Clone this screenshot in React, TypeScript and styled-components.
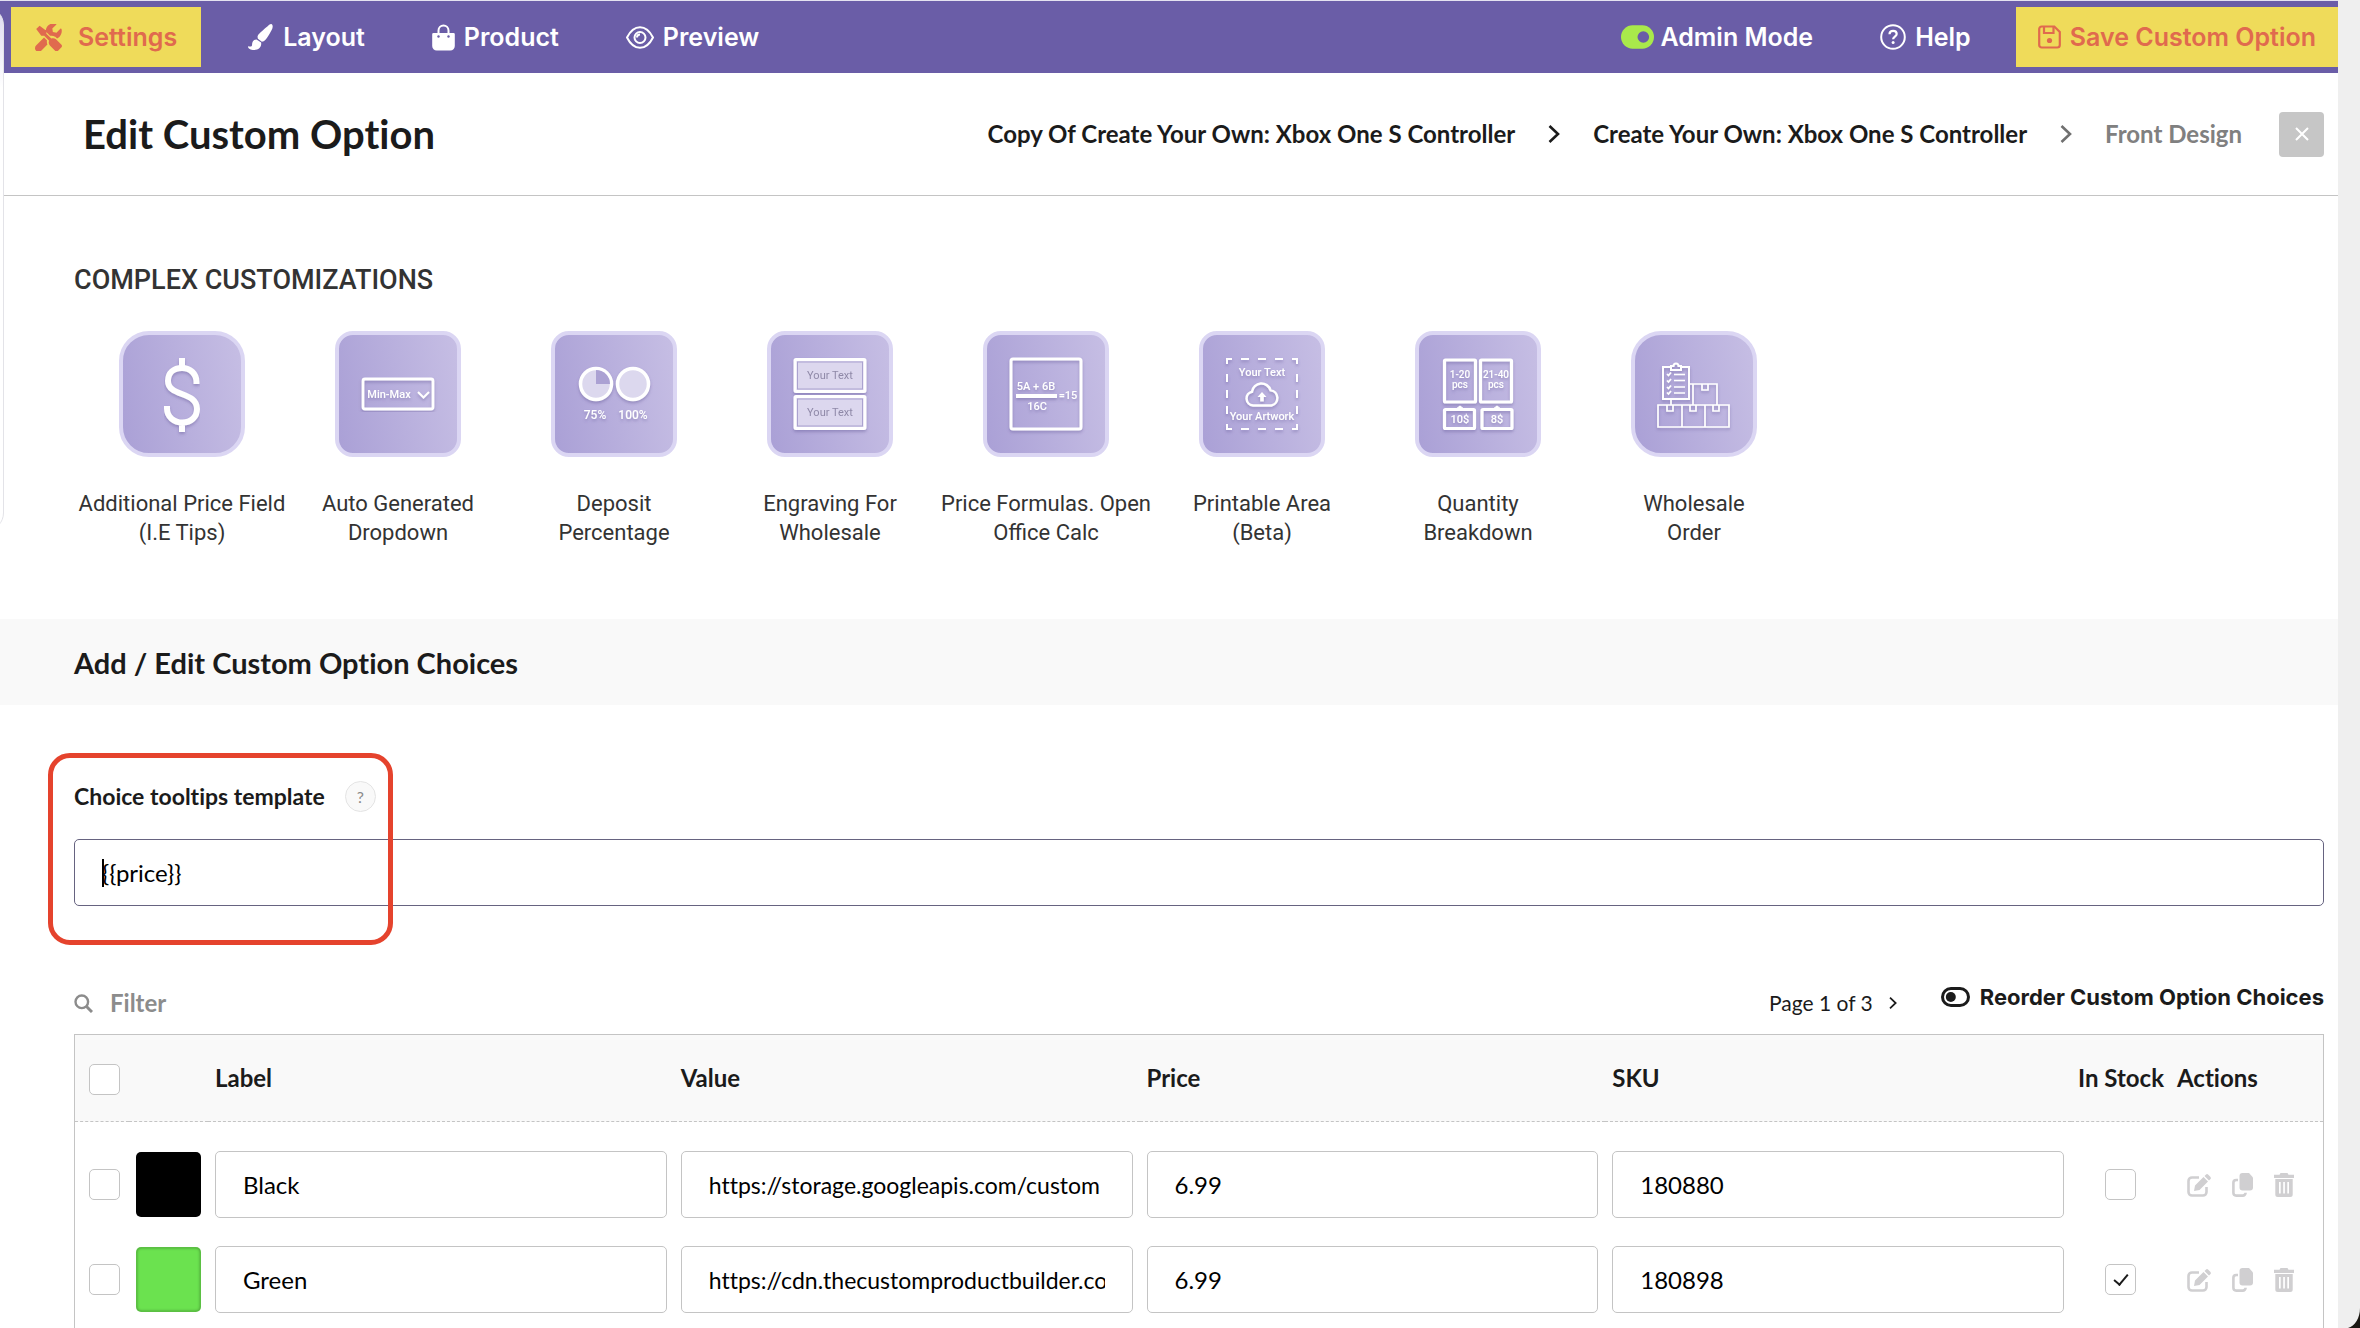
import React, { useId, useState } from "react";
import styled, { createGlobalStyle, css } from "styled-components";

const lato = `Lato, "Open Sans", sans-serif`;
const inter = `Inter, Roboto, sans-serif`;
const roboto = `Roboto, "Noto Sans", sans-serif`;

const GlobalStyle = createGlobalStyle`
  * { box-sizing: border-box; }
  html { height: 100%; overflow: hidden; background: #efefef; }
  body {
    margin: 0;
    font-family: ${lato};
    font-variant-ligatures: none;
    color: #1b1b1b;
  }
  button, input { font: inherit; color: inherit; font-variant-ligatures: none; }
  button { border: 0; padding: 0; background: none; cursor: pointer; }
  svg { display: block; flex: none; }
`;

const Frame = styled.div`
  position: relative;
  display: flex;
  height: 100vh;
  overflow: hidden;
  padding-right: 22px;
  background: #efefef;
`;

const Page = styled.main`
  flex: 1;
  min-width: 0;
  background: #fff;
  border-top: 1px solid #e4e2f0;
`;

const SidePanelEdge = styled.div`
  position: absolute;
  left: -40px;
  top: 7px;
  width: 44px;
  height: 524px;
  border: 1px solid #e3e3e8;
  border-radius: 0 18px 18px 0;
  background: linear-gradient(#dedaf0, #fff 80px);
`;

const WindowCorner = styled.svg`
  position: absolute;
  right: 0;
  bottom: 0;
`;

const TopBar = styled.header`
  display: flex;
  align-items: center;
  justify-content: space-between;
  height: 72px;
  padding-left: 11px;
  background: #6a5da7;
`;

const BarGroup = styled.nav`
  display: flex;
  align-items: center;
`;

const BarButton = styled.button<{ $accent?: boolean; $gap: number; $pad: number }>`
  display: flex;
  align-items: center;
  gap: ${(p) => p.$gap}px;
  height: 60px;
  padding: 0 ${(p) => p.$pad}px;
  font: 600 25px/30px ${inter};
  color: ${(p) => (p.$accent ? "#e06a4e" : "#fff")};
  background: ${(p) => (p.$accent ? "#efdb5a" : "transparent")};
  white-space: nowrap;
`;

const TitleBar = styled.div`
  display: flex;
  align-items: center;
  justify-content: space-between;
  height: 123px;
  padding: 0 14px 0 83px;
  border-bottom: 1px solid #c4c4c4;
`;

const PageTitle = styled.h1`
  margin: 0;
  font-size: 40px;
  line-height: 48px;
  font-weight: 700;
`;

const Crumbs = styled.nav`
  display: flex;
  align-items: center;
  gap: 33px;
  font-size: 24px;
  line-height: 30px;
  font-weight: 700;
`;

const Crumb = styled.a<{ $current?: boolean }>`
  color: ${(p) => (p.$current ? "#808080" : "#1b1b1b")};
  text-decoration: none;
`;

const CloseButton = styled.button`
  display: grid;
  place-items: center;
  width: 45px;
  height: 45px;
  margin-left: 4px;
  border-radius: 4px;
  background: #c6c6c6;
`;

const Section = styled.section<{ $top: number }>`
  padding: ${(p) => p.$top}px 14px 0 74px;
`;

const GroupTitle = styled.h2`
  margin: 0;
  font: 500 27px/36px ${roboto};
  color: #333;
`;

const TileRow = styled.div`
  display: flex;
  margin: 33px 0 72px;
`;

const TileButton = styled.button`
  display: flex;
  flex-direction: column;
  align-items: center;
  gap: 32px;
  width: 216px;
`;

const TileArt = styled.span<{ $round?: boolean }>`
  display: block;
  width: 126px;
  height: 126px;
  border: 4px solid #dbd6f3;
  border-radius: ${(p) => (p.$round ? 30 : 18)}px;
  background: linear-gradient(80deg, #aaa0d6, #c6bee4);
  font-family: ${roboto};
`;

const TileLabel = styled.span`
  font: 400 22px/29px ${roboto};
  color: #333;
  white-space: pre-line;
`;

const SectionBar = styled.div`
  padding: 25px 74px 23px;
  background: #f9f9f9;
`;

const SectionTitle = styled.h2`
  margin: 0;
  font-size: 29px;
  line-height: 38px;
  font-weight: 700;
`;

const TemplateField = styled.div`
  position: relative;
  display: flex;
  flex-direction: column;
  gap: 27px;
`;

const LabelRow = styled.div`
  display: flex;
  align-items: center;
  gap: 20px;
  height: 32px;
`;

const FieldLabel = styled.label`
  font-size: 23px;
  line-height: 30px;
  font-weight: 700;
`;

const HelpButton = styled.button`
  width: 31px;
  height: 31px;
  border: 1px solid #e4e4e4;
  border-radius: 50%;
  background: #f9f9f9;
  color: #8a8a8a;
  font-size: 16px;
  line-height: 29px;
`;

const TextBox = styled.input<{ $focused?: boolean; $compact?: boolean }>`
  display: block;
  width: 100%;
  height: 67px;
  padding: 0 27px;
  border: 1px solid ${(p) => (p.$focused ? "#666380" : "#c4c4c4")};
  border-radius: 5px;
  background: #fff;
  color: #000;
  font-size: ${(p) => (p.$compact ? 23 : 24)}px;
  outline: none;
`;

const Caret = styled.span`
  position: absolute;
  left: 28px;
  bottom: 19px;
  width: 2px;
  height: 28px;
  background: #000;
`;

const Highlight = styled.div`
  position: absolute;
  left: -26px;
  top: -27px;
  width: 345px;
  height: 192px;
  border: 5px solid #e5432d;
  border-radius: 22px;
  pointer-events: none;
`;

const ListTools = styled.div`
  display: flex;
  align-items: center;
  height: 62px;
  margin-top: 66px;
`;

const FilterBox = styled.label`
  display: flex;
  flex: 1;
  align-items: center;
  gap: 17px;
  color: #8c8c8c;
`;

const FilterInput = styled.input`
  flex: 1;
  padding: 0;
  border: 0;
  outline: none;
  background: none;
  font-size: 24px;
  line-height: 30px;
  font-weight: 700;
  &::placeholder { color: #8c8c8c; opacity: 1; }
`;

const Pager = styled.div`
  display: flex;
  align-items: center;
  gap: 16px;
  font-size: 21px;
  line-height: 28px;
`;

const ReorderButton = styled.button`
  display: flex;
  align-items: center;
  gap: 10px;
  margin-left: 44px;
  padding-bottom: 12px;
  font: 700 22px/28px ${inter};
`;

const ChoiceTable = styled.table`
  width: 100%;
  table-layout: fixed;
  border-collapse: separate;
  border-spacing: 0;
  border: 1px solid #c4c4c4;
  border-bottom: 0;
`;

const Col = styled.col<{ $w?: number }>`
  ${(p) => p.$w && css`width: ${p.$w}px;`}
`;

const HeadCell = styled.th`
  height: 87px;
  padding: 0 7px;
  border-bottom: 1px dashed #c4c4c4;
  background: #f9f9f9;
  text-align: left;
  font-size: 24px;
  line-height: 30px;
  font-weight: 700;
  white-space: nowrap;
  &:first-child { padding-left: 14px; }
`;

const Row = styled.tr`
  &:first-child > td { padding-top: 29px; }
  &:last-child > td { padding-bottom: 29px; }
`;

const Cell = styled.td<{ $center?: boolean }>`
  padding: 14px 7px;
  text-align: ${(p) => (p.$center ? "center" : "left")};
  &:first-child { padding-left: 14px; }
`;

const Check = styled.input`
  appearance: none;
  display: inline-grid;
  place-items: center;
  width: 31px;
  height: 31px;
  margin: 0;
  border: 1px solid #c4c4c4;
  border-radius: 5px;
  background: #fff;
  vertical-align: middle;
  &:checked::after {
    content: "";
    width: 6px;
    height: 12px;
    margin-bottom: 3px;
    border: solid #1b1b1b;
    border-width: 0 2px 2px 0;
    transform: rotate(40deg);
  }
`;

const Swatch = styled.button<{ $color: string }>`
  display: block;
  width: 65px;
  height: 65px;
  border-radius: 5px;
  border: 1px solid rgba(0, 0, 0, 0.15);
  box-shadow: inset 0 0 3px rgba(0, 0, 0, 0.35);
  background: ${(p) => p.$color};
`;

const Actions = styled.div`
  display: flex;
  align-items: center;
  gap: 21px;
  padding-left: 10px;
`;

const IconButton = styled.button`
  color: #d0cfd1;
`;

const ToolsIcon = () => (
  <svg width="27" height="27" viewBox="0 0 512 512" fill="currentColor">
    <path d="M502 395 398 291c-24-24-60-29-89-14l-94-94v-55L87 32 23 96l96 128h55l94 94c-15 29-10 65 14 89l104 104c13 13 34 13 47 0l69-69c13-13 13-34 0-47zM331 226c26 0 51 10 69 29l19 19c16-7 30-17 43-29 40-40 54-97 41-148-2-10-15-13-22-6l-74 74-68-11-11-68 74-74c8-8 4-20-6-23-51-13-108 2-148 41-31 31-45 72-44 112l82 83c14-3 29-4 45-2zM228 315l-57-57L20 410c-27 27-27 71 0 98 27 27 71 27 98 0l117-118c-10-24-13-50-7-75z" />
  </svg>
);

const BrushIcon = () => (
  <svg width="28" height="26" viewBox="0 0 512 512" fill="currentColor">
    <path d="M168 305c-65 0-89 47-89 110 0 40-50 30-79 22 0 50 50 75 120 75 85 0 140-48 140-122 0-9 0-18-2-27zM457 0c-15 0-30 7-40 17C213 199 189 214 189 262c0 10 2 20 6 29l78 59c50-6 90-40 190-227 12-22 23-46 23-71C486 22 472 0 457 0z" transform="translate(20 0)" />
  </svg>
);

const BagIcon = () => (
  <svg width="23" height="27" viewBox="0 0 23 27" fill="none">
    <path d="M6.500 11V6.500a5 5 0 0 1 10 0V11" stroke="#fff" strokeWidth="2" />
    <path d="M1.500 9h20a1.300 1.300 0 0 1 1.300 1.300V22a4.500 4.500 0 0 1-4.500 4.500H4.700A4.500 4.500 0 0 1 .2 22V10.300A1.300 1.300 0 0 1 1.500 9z" fill="#fff" />
    <circle cx="6.500" cy="12.500" r="1.200" fill="#6a5da7" />
    <circle cx="16.500" cy="12.500" r="1.200" fill="#6a5da7" />
  </svg>
);

const EyeIcon = () => (
  <svg width="28" height="23" viewBox="0 0 28 23" fill="none" stroke="#fff" strokeWidth="2">
    <path d="M1 11.500C4.500 4.500 9 1.200 14 1.200s9.500 3.300 13 10.300c-3.500 7-8 10.300-13 10.300S4.500 18.500 1 11.500z" />
    <circle cx="14" cy="11.500" r="5.500" />
    <path d="M14 8.500a3 3 0 0 0-3 3" />
  </svg>
);

const ToggleOnIcon = () => (
  <svg width="33" height="24" viewBox="0 0 34 24">
    <rect width="34" height="24" rx="12" fill="#a9e94b" />
    <circle cx="23" cy="12" r="6" fill="#6a5da7" />
  </svg>
);

const HelpIcon = () => (
  <svg width="26" height="26" viewBox="0 0 26 26" fill="none" stroke="#fff" strokeWidth="2">
    <circle cx="13" cy="13" r="11.800" />
    <path d="M9.500 10.200c0-2 1.500-3.400 3.600-3.400s3.600 1.300 3.600 3.200c0 2.600-3.600 2.700-3.600 5.200" strokeWidth="2.200" />
    <circle cx="13.100" cy="18.600" r="1.500" fill="#fff" stroke="none" />
  </svg>
);

const SaveIcon = () => (
  <svg width="23" height="24" viewBox="0 0 23 24" fill="none" stroke="currentColor" strokeWidth="2.200">
    <path d="M1.200 4A2.500 2.500 0 0 1 3.700 1.500h12.600l5.500 5.500v13a2.500 2.500 0 0 1-2.500 2.500H3.700A2.500 2.500 0 0 1 1.200 20z" />
    <path d="M6 2v6h9.500V2" />
    <circle cx="11.500" cy="15.500" r="2.600" fill="currentColor" stroke="none" />
  </svg>
);

const Chevron = ({ color = "#1b1b1b", size = 18 }: { color?: string; size?: number }) => (
  <svg width={(size * 2) / 3} height={size} viewBox="0 0 12 18" fill="none">
    <path d="M1.500 1 10 9l-8.500 8" stroke={color} strokeWidth="2.600" />
  </svg>
);

const SearchIcon = () => (
  <svg width="19" height="19" viewBox="0 0 19 19" fill="none" stroke="currentColor" strokeWidth="2.400">
    <circle cx="7.800" cy="7.800" r="6.300" />
    <path d="m12 12 6 6" strokeWidth="3" />
  </svg>
);

const ToggleOffIcon = () => (
  <svg width="29" height="20" viewBox="0 0 29 20">
    <rect x="1.500" y="1.500" width="26" height="17" rx="8.500" fill="none" stroke="#1b1b1b" strokeWidth="3" />
    <circle cx="9.800" cy="10" r="5" fill="#1b1b1b" />
  </svg>
);

const EditIcon = () => (
  <svg width="24" height="24" viewBox="0 0 24 24" fill="none">
    <path d="M12 4.500H5A3.500 3.500 0 0 0 1.500 8v11A3.500 3.500 0 0 0 5 22.500h11a3.500 3.500 0 0 0 3.500-3.500v-5" stroke="currentColor" strokeWidth="2.600" />
    <path d="m7 18 1-5.500 8.500-8.500 4.500 4.500-8.500 8.500zM17.500 3l1.300-1.300a1.800 1.800 0 0 1 2.500 0l2 2a1.800 1.800 0 0 1 0 2.500L22 7.500z" fill="currentColor" />
  </svg>
);

const CopyIcon = () => (
  <svg width="21" height="24" viewBox="0 0 21 24">
    <path d="M10.500 0h6.500l4 4.500v10a3 3 0 0 1-3 3h-7.500a3 3 0 0 1-3-3V3a3 3 0 0 1 3-3z" fill="currentColor" />
    <path d="M6 7H4.200A2.800 2.800 0 0 0 1.400 9.800v10a2.800 2.800 0 0 0 2.800 2.800h6.600a2.800 2.800 0 0 0 2.800-2.800" fill="none" stroke="currentColor" strokeWidth="2.600" />
  </svg>
);

const TrashIcon = () => (
  <svg width="20" height="24" viewBox="0 0 20 24" fill="currentColor">
    <path d="M6.500 0h7l1 1.800H20V5H0V1.800h5.500z" />
    <path fillRule="evenodd" d="M1.300 6h17.400v15.500A2.500 2.500 0 0 1 16.200 24H3.800a2.500 2.500 0 0 1-2.500-2.500zM5 9v11.500h1.700V9zm4.200 0v11.500h1.700V9zm4.100 0v11.500H15V9z" />
  </svg>
);

const Art = ({ children }: { children: React.ReactNode }) => {
  const id = useId();
  return (
    <svg width="118" height="118" viewBox="4 4 118 118" fill="none" stroke="#fff">
      <filter id={id} x="-10%" y="-10%" width="120%" height="120%">
        <feDropShadow dx="0" dy="2" stdDeviation="1.500" floodColor="#5b4f8e" floodOpacity="0.4" />
      </filter>
      <g filter={`url(#${id})`}>{children}</g>
    </svg>
  );
};

const ArtText = styled.text<{ $size?: number; $muted?: boolean }>`
  font: ${(p) => (p.$muted ? 400 : 500)} ${(p) => p.$size ?? 11}px ${roboto};
  text-anchor: middle;
  fill: ${(p) => (p.$muted ? "#8f89a8" : "#fff")};
  stroke: none;
`;

const DollarArt = () => (
  <Art>
    <path d="M77.500 53v-2c0-8-6-14-14.500-14s-14 5-14 13c0 16 29 10 29 28 0 8-6 13.500-14.500 13.500S48 86 48 77.500V75M63 27v10m0 54v10" strokeWidth="6" />
  </Art>
);

const DropdownArt = () => (
  <Art>
    <rect x="28" y="48" width="70" height="30" rx="2" strokeWidth="2.800" />
    <ArtText x="54" y="67">Min-Max</ArtText>
    <path d="m83 61 5.500 5.500L94 61" strokeWidth="2" />
  </Art>
);

const DepositArt = () => (
  <Art>
    <circle cx="45" cy="53" r="15.500" fill="#dcd8ee" strokeWidth="3.500" />
    <path d="M45 53V39a14 14 0 0 1 14 14z" fill="#aba1d3" stroke="none" />
    <circle cx="82" cy="53" r="15.500" fill="#dcd8ee" strokeWidth="3.500" />
    <ArtText x="44" y="88" $size={12}>75%</ArtText>
    <ArtText x="82" y="88" $size={12}>100%</ArtText>
  </Art>
);

const EngravingArt = () => (
  <Art>
    <rect x="28" y="28.500" width="70" height="32" rx="1" fill="#dcd7ee" strokeWidth="3" />
    <rect x="30.500" y="31" width="65" height="27" stroke="#aaa2cf" />
    <rect x="28" y="65.500" width="70" height="32" rx="1" fill="#dcd7ee" strokeWidth="3" />
    <rect x="30.500" y="68" width="65" height="27" stroke="#aaa2cf" />
    <ArtText x="63" y="48" $muted>Your Text</ArtText>
    <ArtText x="63" y="85" $muted>Your Text</ArtText>
  </Art>
);

const FormulaArt = () => (
  <Art>
    <rect x="28" y="28" width="70" height="70" rx="2" strokeWidth="3" />
    <ArtText x="53" y="59">5A + 6B</ArtText>
    <path d="M33 65h41" strokeWidth="4" />
    <ArtText x="54" y="79">16C</ArtText>
    <ArtText x="85" y="68">=15</ArtText>
  </Art>
);

const PrintableArt = () => (
  <Art>
    <path d="M28 33v-5h5m60 0h5v5m0 60v5h-5m-60 0h-5v-5M42 28h8m9 0h8m9 0h8M42 98h8m9 0h8m9 0h8M28 43v8m0 8v8m0 8v8M98 43v8m0 8v8m0 8v8" strokeWidth="2" />
    <ArtText x="63" y="45">Your Text</ArtText>
    <path d="M54 74.500a7 7 0 0 1-1-13.800 9.500 9.500 0 0 1 18.500-1.500 7.800 7.800 0 0 1 1 15.300z" strokeWidth="2.500" />
    <path d="m63 61 4.500 5h-2.700v4.500h-3.600V66h-2.700z" fill="#fff" stroke="none" />
    <ArtText x="63" y="89">Your Artwork</ArtText>
  </Art>
);

const QuantityArt = () => (
  <Art>
    <rect x="29.500" y="29" width="31" height="42" rx="1" strokeWidth="3.200" />
    <rect x="65.500" y="29" width="31" height="42" rx="1" strokeWidth="3.200" />
    <rect x="29.500" y="78.500" width="30" height="19" rx="1" strokeWidth="3.200" />
    <rect x="67" y="78.500" width="30" height="19" rx="1" strokeWidth="3.200" />
    <path d="m41 78 4-3 4 3zm37 0 4-3 4 3z" fill="#fff" strokeWidth="1" />
    <ArtText x="45" y="47" $size={10}>1-20</ArtText>
    <ArtText x="45" y="57" $size={10}>pcs</ArtText>
    <ArtText x="81" y="47" $size={10}>21-40</ArtText>
    <ArtText x="81" y="57" $size={10}>pcs</ArtText>
    <ArtText x="45" y="92">10$</ArtText>
    <ArtText x="82" y="92">8$</ArtText>
  </Art>
);

const WholesaleArt = () => (
  <Art>
    <path d="M40 36h-8v32h26V36h-8M40 39v-4h2.500a2.500 2.500 0 0 1 5 0H50v4z" strokeWidth="2" />
    <path d="m36 43 1.500 1.500 2.500-3m-4 8 1.500 1.500 2.500-3m-4 8 1.500 1.500 2.500-3m-4 7 1.500 1.500 2.500-3M43 43.500h11M43 49.500h11M43 56h11M43 62h11" strokeWidth="1.700" />
    <path d="M59 53h27v21M62 53v21M40 69v5M27 74h71v22H27zM51 74v22M74 74v22M71 53v6h6v-6M36 74v6h6v-6M59 74v6h6v-6M82 74v6h6v-6" strokeWidth="1.700" />
  </Art>
);

const tiles = [
  { label: "Additional Price Field\n(I.E Tips)", art: <DollarArt />, round: true },
  { label: "Auto Generated\nDropdown", art: <DropdownArt /> },
  { label: "Deposit\nPercentage", art: <DepositArt /> },
  { label: "Engraving For\nWholesale", art: <EngravingArt /> },
  { label: "Price Formulas. Open\nOffice Calc", art: <FormulaArt /> },
  { label: "Printable Area\n(Beta)", art: <PrintableArt /> },
  { label: "Quantity\nBreakdown", art: <QuantityArt /> },
  { label: "Wholesale\nOrder", art: <WholesaleArt />, round: true },
];

const choices = [
  { label: "Black", value: "https://storage.googleapis.com/custom", price: "6.99", sku: "180880", color: "#000", stock: false },
  { label: "Green", value: "https://cdn.thecustomproductbuilder.com", price: "6.99", sku: "180898", color: "#6be24f", stock: true },
];

export default function App() {
  const [template, setTemplate] = useState("{{price}}");
  return (
    <>
      <GlobalStyle />
      <Frame>
        <Page>
          <TopBar>
            <BarGroup>
              <BarButton $accent $gap={16} $pad={24}><ToolsIcon />Settings</BarButton>
              <BarButton $gap={9} $pad={45}><BrushIcon />Layout</BarButton>
              <BarButton $gap={9} $pad={22}><BagIcon />Product</BarButton>
              <BarButton $gap={9} $pad={45}><EyeIcon />Preview</BarButton>
            </BarGroup>
            <BarGroup>
              <BarButton $gap={6} $pad={22}><ToggleOnIcon />Admin Mode</BarButton>
              <BarButton $gap={9} $pad={45}><HelpIcon />Help</BarButton>
              <BarButton $accent $gap={9} $pad={22}><SaveIcon />Save Custom Option</BarButton>
            </BarGroup>
          </TopBar>
          <TitleBar>
            <PageTitle>Edit Custom Option</PageTitle>
            <Crumbs aria-label="Breadcrumb">
              <Crumb href="#copy">Copy Of Create Your Own: Xbox One S Controller</Crumb>
              <Chevron />
              <Crumb href="#create">Create Your Own: Xbox One S Controller</Crumb>
              <Chevron color="#707070" />
              <Crumb href="#front" $current>Front Design</Crumb>
              <CloseButton aria-label="Close">
                <svg width="14" height="14" viewBox="0 0 14 14" stroke="#fff" strokeWidth="2">
                  <path d="m1 1 12 12M13 1 1 13" />
                </svg>
              </CloseButton>
            </Crumbs>
          </TitleBar>
          <Section $top={66}>
            <GroupTitle>COMPLEX CUSTOMIZATIONS</GroupTitle>
            <TileRow>
              {tiles.map((t) => (
                <TileButton key={t.label}>
                  <TileArt $round={t.round}>{t.art}</TileArt>
                  <TileLabel>{t.label}</TileLabel>
                </TileButton>
              ))}
            </TileRow>
          </Section>
          <SectionBar>
            <SectionTitle>Add / Edit Custom Option Choices</SectionTitle>
          </SectionBar>
          <Section $top={75}>
            <TemplateField>
              <LabelRow>
                <FieldLabel htmlFor="template">Choice tooltips template</FieldLabel>
                <HelpButton aria-label="Help on templates">?</HelpButton>
              </LabelRow>
              <TextBox id="template" $focused value={template} onChange={(e) => setTemplate(e.target.value)} />
              <Caret />
              <Highlight />
            </TemplateField>
            <ListTools>
              <FilterBox>
                <SearchIcon />
                <FilterInput aria-label="Filter" placeholder="Filter" />
              </FilterBox>
              <Pager>
                Page 1 of 3
                <button aria-label="Next page"><Chevron size={12} /></button>
              </Pager>
              <ReorderButton><ToggleOffIcon />Reorder Custom Option Choices</ReorderButton>
            </ListTools>
            <ChoiceTable>
              <colgroup>
                <Col $w={54} />
                <Col $w={79} />
                <Col /><Col /><Col /><Col />
                <Col $w={99} />
                <Col $w={153} />
              </colgroup>
              <thead>
                <tr>
                  <HeadCell><Check type="checkbox" aria-label="Select all" /></HeadCell>
                  <HeadCell />
                  <HeadCell>Label</HeadCell>
                  <HeadCell>Value</HeadCell>
                  <HeadCell>Price</HeadCell>
                  <HeadCell>SKU</HeadCell>
                  <HeadCell>In Stock</HeadCell>
                  <HeadCell>Actions</HeadCell>
                </tr>
              </thead>
              <tbody>
                {choices.map((c) => (
                  <Row key={c.sku}>
                    <Cell><Check type="checkbox" aria-label={`Select ${c.label}`} /></Cell>
                    <Cell><Swatch $color={c.color} aria-label={`${c.label} colour`} /></Cell>
                    <Cell><TextBox aria-label="Label" defaultValue={c.label} /></Cell>
                    <Cell><TextBox $compact aria-label="Value" defaultValue={c.value} /></Cell>
                    <Cell><TextBox aria-label="Price" defaultValue={c.price} /></Cell>
                    <Cell><TextBox aria-label="SKU" defaultValue={c.sku} /></Cell>
                    <Cell $center><Check type="checkbox" aria-label="In stock" defaultChecked={c.stock} /></Cell>
                    <Cell>
                      <Actions>
                        <IconButton aria-label="Edit"><EditIcon /></IconButton>
                        <IconButton aria-label="Copy"><CopyIcon /></IconButton>
                        <IconButton aria-label="Delete"><TrashIcon /></IconButton>
                      </Actions>
                    </Cell>
                  </Row>
                ))}
              </tbody>
            </ChoiceTable>
          </Section>
        </Page>
        <SidePanelEdge />
        <WindowCorner width="12" height="20" viewBox="0 0 12 20">
          <path d="M12 0v20H0C7 18 12 10 12 0z" fill="#1a1712" />
        </WindowCorner>
      </Frame>
    </>
  );
}
